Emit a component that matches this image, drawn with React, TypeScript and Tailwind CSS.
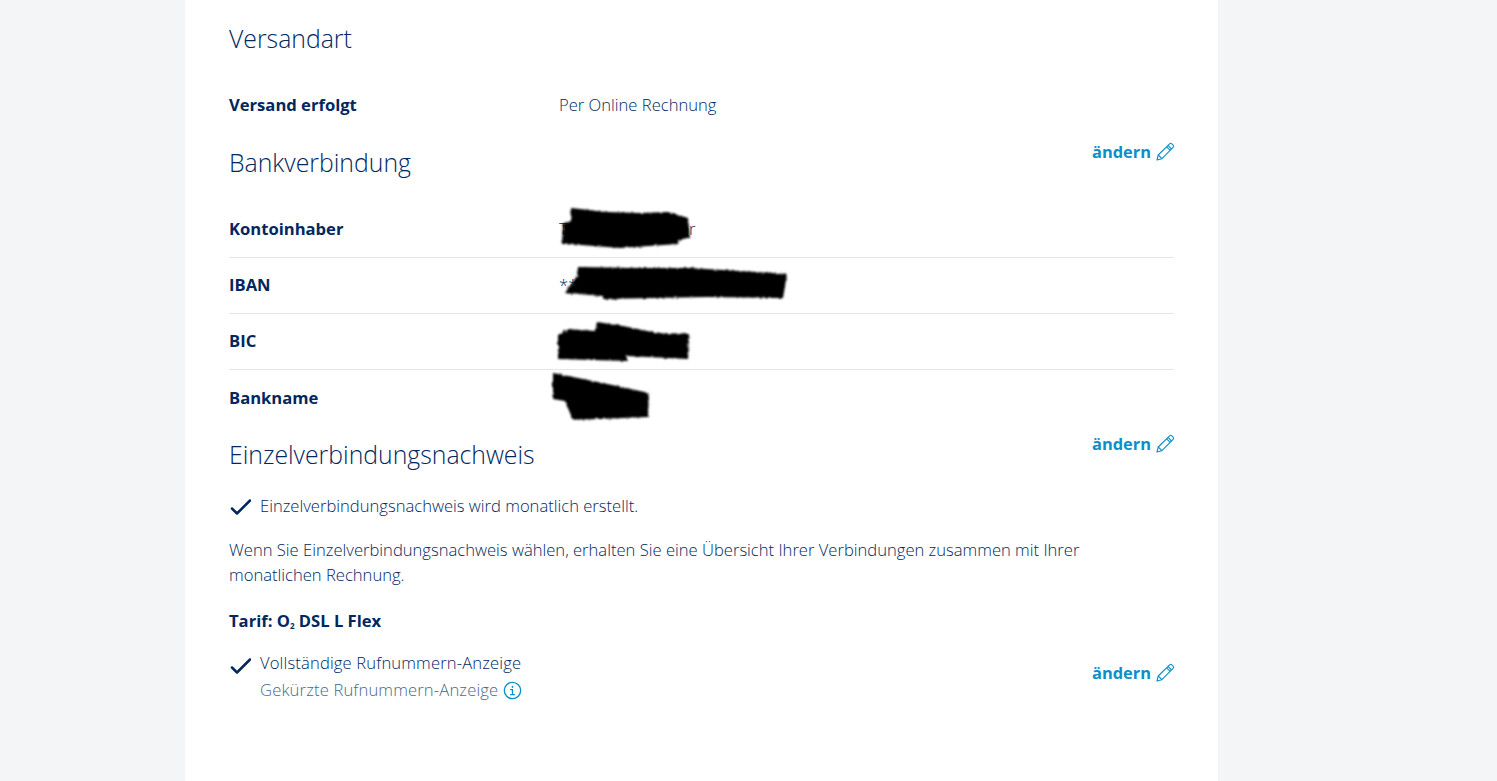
import React from "react";

const font = { fontFamily: '"Open Sans", "Noto Sans", sans-serif' };

function Pencil() {
  return (
    <svg width="20" height="20" viewBox="0 0 20 20" fill="none" stroke="#0a8fca" strokeWidth="1.1" strokeLinejoin="round" className="ml-[4px] shrink-0">
      <path d="M2 18l1.2-5L14.6 1.8a1.6 1.6 0 0 1 2.2 0l1.3 1.3a1.6 1.6 0 0 1 0 2.2L6.9 16.7 2 18z" />
      <path d="M3.2 13l3.7 3.7M13 3.4l3.6 3.6M11.6 4.8l3.6 3.6" />
    </svg>
  );
}

function Change({ className }: { className: string }) {
  return (
    <a className={"flex items-center text-[16.4px] font-bold text-[#0a8fca] " + className}>
      ändern
      <Pencil />
    </a>
  );
}

function Check() {
  return (
    <svg width="22" height="18" viewBox="0 0 22 18" fill="none" stroke="#00285f" strokeWidth="2.5" strokeLinecap="round" strokeLinejoin="round" className="shrink-0">
      <path d="M3 10.5l5 5L21 2.5" />
    </svg>
  );
}

function Scribble({ box, points }: { box: string; points: string }) {
  return (
    <svg viewBox={box} className="absolute left-0 top-0 w-[945px] h-[56px] overflow-visible pointer-events-none">
      <defs>
        <filter id="rough" x="-10%" y="-30%" width="120%" height="160%">
          <feTurbulence type="fractalNoise" baseFrequency="0.35" numOctaves="2" seed="4" />
          <feDisplacementMap in="SourceGraphic" scale="3" />
          <feGaussianBlur stdDeviation="0.9" />
        </filter>
      </defs>
      <polygon points={points} fill="#000" filter="url(#rough)" />
    </svg>
  );
}

function Row({ label, value, last, children }: { label: string; value?: React.ReactNode; last?: boolean; children?: React.ReactNode }) {
  return (
    <div className={"relative flex h-[56px] items-center " + (last ? "" : "border-b border-[#e3e5e8]")}>
      <div className="w-[330px] text-[16.6px] font-bold text-[#00285f]">{label}</div>
      <div className="text-[16.6px] font-[340] text-[#00285f]">{value}</div>
      {children}
    </div>
  );
}

export default function App() {
  return (
    <div style={font} className="flex min-h-[781px] bg-[#f4f5f7] pl-[185px]">
      <div className="h-[781px] w-[1033px] overflow-hidden bg-white px-[44px] pt-[23px] text-[#00285f]">
        <h2 className="h-[32px] text-[24.8px] font-light leading-[30px]">Versandart</h2>
        <div className="mt-[22px]">
          <Row label="Versand erfolgt" value="Per Online Rechnung" last />
        </div>

        <div className="relative mt-[14px] h-[55px]">
          <h2 className="text-[24.8px] font-light leading-[30px]">Bankverbindung</h2>
          <Change className="absolute right-[-1px] top-[-7px]" />
        </div>
        <Row label="Kontoinhaber" value="T••••••••••••••••••er">
          <Scribble box="229 201 945 56" points="571,207 607,211 640,212 668,211 688,217 690,237 680,238 678,243 620,247 568,243 562,243 563,223 571,220" />
        </Row>
        <Row label="IBAN" value="**">
          <Scribble box="229 257 945 56" points="578,266 640,267 690,267 740,270 787,273 783,297 707,296 603,298 603,295 565,292 577,275" />
        </Row>
        <Row label="BIC">
          <Scribble box="229 313 945 56" points="558,334 569,328 595,330 597,321 623,325 657,332 689,333 688,358 627,355 627,360 558,358" />
        </Row>
        <Row label="Bankname" last>
          <Scribble box="229 369 945 56" points="553,372 583,378 617,385 649,392 648,416 573,419 565,400 553,398" />
        </Row>

        <div className="relative mt-[13px] h-[54px]">
          <h2 className="text-[24.8px] font-light leading-[30px]">Einzelverbindungsnachweis</h2>
          <Change className="absolute right-[-1px] top-[-7px]" />
        </div>

        <div className="flex h-[26px] items-center gap-[9px] text-[16.6px] font-[340]">
          <div className="pt-[2px]">
            <Check />
          </div>
          <span>Einzelverbindungsnachweis wird monatlich erstellt.</span>
        </div>
        <p className="mt-[18px] text-[16.6px] font-[340] leading-[25px]">
          Wenn Sie Einzelverbindungsnachweis wählen, erhalten Sie eine Übersicht Ihrer Verbindungen zusammen mit Ihrer
          <br />
          monatlichen Rechnung.
        </p>
        <div className="mt-[21px] text-[16.6px] font-bold leading-[26px]">
          Tarif: O<sub className="text-[8px]">2</sub> DSL L Flex
        </div>

        <div className="relative mt-[16px] flex items-start gap-[9px]">
          <div className="pt-[7px]">
            <Check />
          </div>
          <div className="text-[16.6px] font-[340] tracking-[0.15px]">
            <div className="leading-[26px]">Vollständige Rufnummern-Anzeige</div>
            <div className="mt-[1px] flex items-center gap-[5px] leading-[26px] text-[#4a6788]">
              Gekürzte Rufnummern-Anzeige
              <svg width="19" height="19" viewBox="0 0 20 20" fill="none" stroke="#0a8fca" strokeWidth="1.4" strokeLinecap="round">
                <circle cx="10" cy="10" r="8.6" />
                <path d="M8 9h2v5.2M8 14.4h4" />
                <path d="M10 5.8v.6" strokeWidth="1.8" />
              </svg>
            </div>
          </div>
          <Change className="absolute right-[-1px] top-[11px]" />
        </div>
      </div>
    </div>
  );
}
